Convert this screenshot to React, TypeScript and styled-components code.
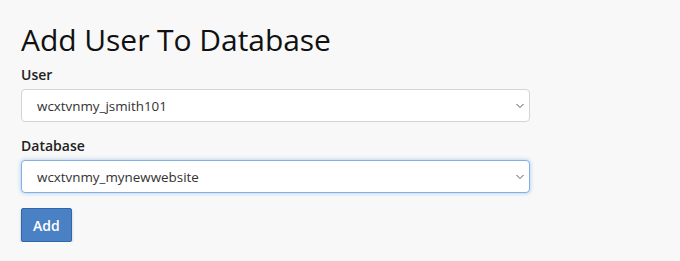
import React from "react";
import styled, { createGlobalStyle } from "styled-components";

const Global = createGlobalStyle`
  html, body { margin: 0; padding: 0; background: #f8f8f8; }
  body { font-family: "Open Sans", "Liberation Sans", sans-serif; color: #222; }
`;

const Page = styled.div`
  padding: 22px 21px 0;
  width: 509px;
`;

const Title = styled.h1`
  margin: 0 0 7px;
  font-size: 30px;
  line-height: 36px;
  font-weight: 400;
  color: #111;
  letter-spacing: -0.05px;
`;

const Field = styled.div`
  display: flex;
  flex-direction: column;
  gap: 4px;
  margin-bottom: 14px;
`;

const Label = styled.label`
  font-size: 14px;
  line-height: 20px;
  font-weight: 600;
  color: #222;
`;

const SelectWrap = styled.div`
  position: relative;
`;

const Select = styled.select<{ $focused?: boolean }>`
  appearance: none;
  -webkit-appearance: none;
  display: block;
  width: 100%;
  height: 33px;
  box-sizing: border-box;
  margin: 0;
  padding: 0 30px 0 15px;
  font-family: "Open Sans", "Liberation Sans", sans-serif;
  font-size: 13.4px;
  color: #333;
  background: #fff;
  border: 1px solid ${(p) => (p.$focused ? "#7fb0e8" : "#d4d4d4")};
  border-radius: 4px;
  box-shadow: ${(p) => (p.$focused ? "0 0 4px rgba(102, 160, 230, 0.55)" : "none")};
  outline: none;
`;

const Chevron = styled.svg`
  position: absolute;
  right: 6px;
  top: 50%;
  transform: translateY(-50%);
  width: 8px;
  height: 5px;
  pointer-events: none;
`;

const Button = styled.button`
  margin-top: 1px;
  height: 34px;
  padding: 0 11px;
  box-sizing: border-box;
  font-family: "Open Sans", "Liberation Sans", sans-serif;
  font-size: 14px;
  font-weight: 600;
  color: #fff;
  background: #4a80c4;
  border: 1px solid #2f66ad;
  border-radius: 2px;
  box-shadow: 0 2px 3px rgba(0, 0, 0, 0.2);
`;

const Arrow = () => (
  <Chevron viewBox="0 0 8 5">
    <path d="M0.5 0.5 L4 4 L7.5 0.5" fill="none" stroke="#555" strokeWidth="1" />
  </Chevron>
);

export default function App() {
  return (
    <>
      <Global />
      <Page>
        <Title>Add User To Database</Title>
        <Field>
          <Label>User</Label>
          <SelectWrap>
            <Select defaultValue="u">
              <option value="u">wcxtvnmy_jsmith101</option>
            </Select>
            <Arrow />
          </SelectWrap>
        </Field>
        <Field>
          <Label>Database</Label>
          <SelectWrap>
            <Select $focused defaultValue="d">
              <option value="d">wcxtvnmy_mynewwebsite</option>
            </Select>
            <Arrow />
          </SelectWrap>
        </Field>
        <Button>Add</Button>
      </Page>
    </>
  );
}
